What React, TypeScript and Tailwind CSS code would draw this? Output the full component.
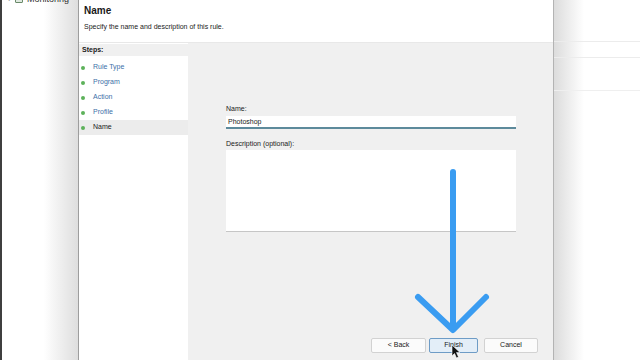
export default function App() {
    const steps = ['Rule Type', 'Program', 'Action', 'Profile', 'Name'];

    return (
        <div className="relative w-[640px] h-[360px] overflow-hidden flex bg-white font-['Liberation_Sans',Arial,sans-serif] text-[#1a1a1a]">
            {/* Left strip behind the dialog */}
            <div className="w-[78px] h-full border-l-2 border-[#3f3f3f] bg-linear-to-r from-white from-55% to-[#dedede]">
                <div className="-mt-[7px] flex items-center gap-[4px] pl-[6px] text-[9px] leading-[12px] text-[#333]">
                    <span className="text-[#777]">›</span>
                    <span className="w-[8px] h-[8px] rounded-[1px] border border-[#6a8a6a] bg-[#dfe9df]" />
                    <span>Monitoring</span>
                </div>
            </div>

            {/* Wizard dialog */}
            <div className="w-[476px] h-full flex flex-col border-l border-[#9d9d9d] border-r border-r-[#b3b3b3] bg-white">
                <div className="h-[43px] px-[5px] pt-[4px] border-b border-[#e8e8e8]">
                    <div className="text-[10px] font-bold leading-[14px]">Name</div>
                    <div className="mt-[4px] text-[7px] leading-[10px]">Specify the name and description of this rule.</div>
                </div>

                <div className="flex-1 flex">
                    <div className="w-[109px] bg-white pt-[1px]">
                        <div className="h-[12px] bg-[#f0f0f0] px-[3px] text-[7px] font-bold leading-[12px]">Steps:</div>
                        <div className="mt-[4px]">
                            {steps.map((s) => (
                                <div
                                    key={s}
                                    className={`h-[15px] flex items-center gap-[8px] pl-[2px] text-[7px] ${s === 'Name' ? 'bg-[#ececec] text-[#1a1a1a]' : 'text-[#3d6fa8]'}`}
                                >
                                    <span className="w-[4px] h-[4px] rounded-full bg-[#5db15a]" />
                                    <span>{s}</span>
                                </div>
                            ))}
                        </div>
                    </div>

                    <div className="flex-1 flex flex-col bg-[#f0f0f0]">
                        <div className="pl-[38px] pr-[37px] pt-[61px]">
                            <div className="text-[7px] leading-[9px]">Name:</div>
                            <div className="mt-[3px] h-[13px] bg-white border-b-2 border-[#5d8a9b] pl-[2px] text-[7px] leading-[11px]">Photoshop</div>
                            <div className="mt-[10px] text-[7px] leading-[9px]">Description (optional):</div>
                            <div className="mt-[2px] h-[82px] bg-white border-b border-[#c6c6c6]" />
                        </div>

                        <div className="mt-auto mb-[7px] pr-[15px] flex justify-end text-[7px]">
                            <div className="w-[55px] h-[15px] flex items-center justify-center rounded-[2px] border border-[#d2d2d2] bg-[#fbfbfb]">&lt; Back</div>
                            <div className="ml-[3px] w-[49px] h-[15px] flex items-center justify-center rounded-[2px] border border-[#6e9cc6] bg-[#e3eef8]">Finish</div>
                            <div className="ml-[6px] w-[54px] h-[15px] flex items-center justify-center rounded-[2px] border border-[#d2d2d2] bg-[#fbfbfb]">Cancel</div>
                        </div>
                    </div>
                </div>
            </div>

            {/* Right strip behind the dialog */}
            <div className="flex-1 h-full bg-linear-to-r from-[#dcdcdc] via-white via-35% to-white">
                <div className="h-[42px] border-b border-[#ececec]" />
                <div className="h-[16px] border-b border-[#ececec]" />
                <div className="h-[33px] border-b border-[#efefef]" />
            </div>

            {/* Annotation arrow and mouse pointer */}
            <svg className="absolute inset-0 pointer-events-none" width="640" height="360" viewBox="0 0 640 360">
                <path d="M453 172 L453 328" stroke="#3a9cf1" strokeWidth="6" strokeLinecap="round" fill="none" />
                <path d="M418 297 L453 330 L486 297" stroke="#3a9cf1" strokeWidth="6" strokeLinecap="round" strokeLinejoin="round" fill="none" />
                <path d="M452 345 L452 356 L454.5 353.5 L456.5 358 L458.5 357 L456.5 352.5 L460 352.5 Z" fill="#111" stroke="#fff" strokeWidth="0.6" />
            </svg>
        </div>
    );
}
